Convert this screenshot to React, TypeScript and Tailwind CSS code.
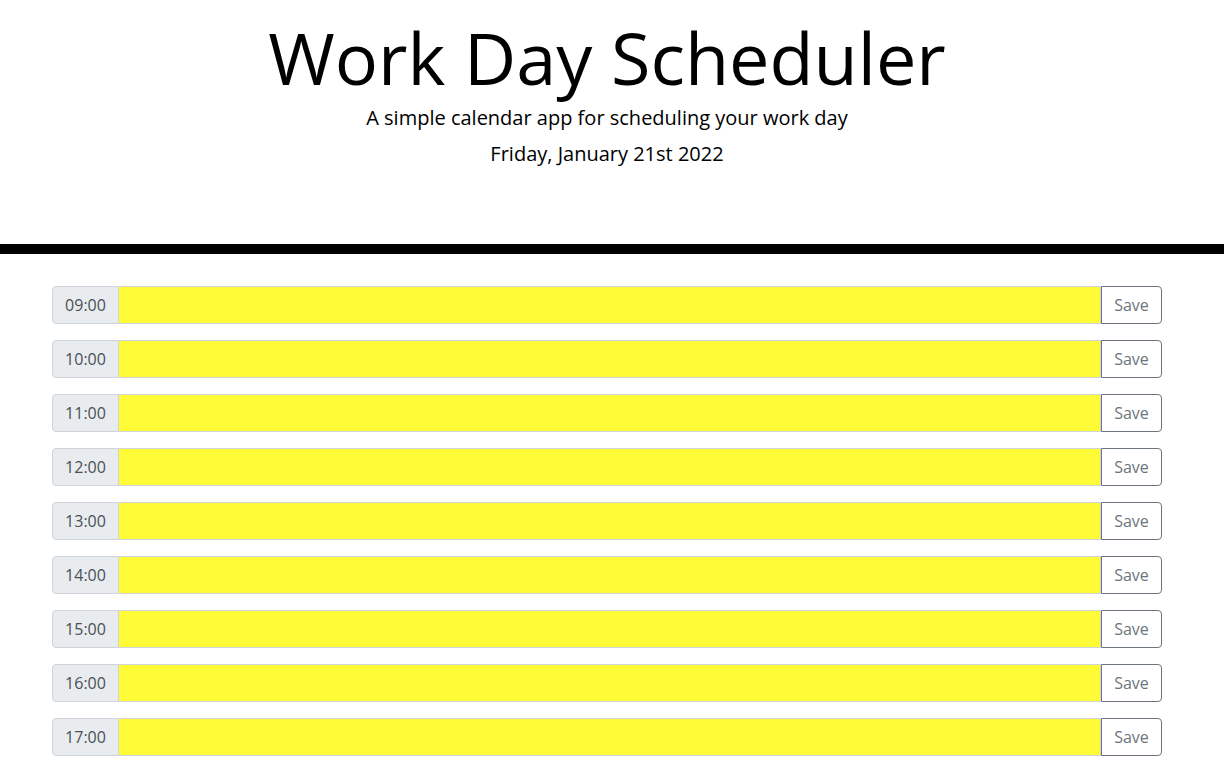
import React from "react";

const hours = ["09:00", "10:00", "11:00", "12:00", "13:00", "14:00", "15:00", "16:00", "17:00"];

const App = () => {
  return (
    <div className="min-h-screen bg-white font-['Open_Sans',sans-serif] text-black">
      {/* header */}
      <header className="pr-[10px] text-center border-b-[10px] border-black pt-[8px] pb-[78px]">
        <h1 className="text-[72px] leading-[98px] font-normal">Work Day Scheduler</h1>
        <p className="text-[20px] leading-[24px]">A simple calendar app for scheduling your work day</p>
        <p className="text-[20px] leading-[24px] mt-[12px]">Friday, January 21st 2022</p>
      </header>

      {/* time blocks */}
      <main className="ml-[52px] w-[1110px] pt-[32px]">
        {hours.map((h) => (
          <div key={h} className="flex h-[38px] mb-[16px]">
            <div className="w-[67px] flex items-center justify-center bg-[#e9ecef] border border-[#ced4da] rounded-l-[4px] text-[16px] text-[#495057]">
              {h}
            </div>
            <textarea className="flex-1 bg-[#fffb37] border border-[#ced4da] border-l-0 resize-none outline-none px-3 py-1.5" />
            <button className="w-[61px] bg-white border border-[#6c757d] rounded-r-[4px] text-[16px] text-[#6c757d]">
              Save
            </button>
          </div>
        ))}
      </main>
    </div>
  );
};

export default App;
